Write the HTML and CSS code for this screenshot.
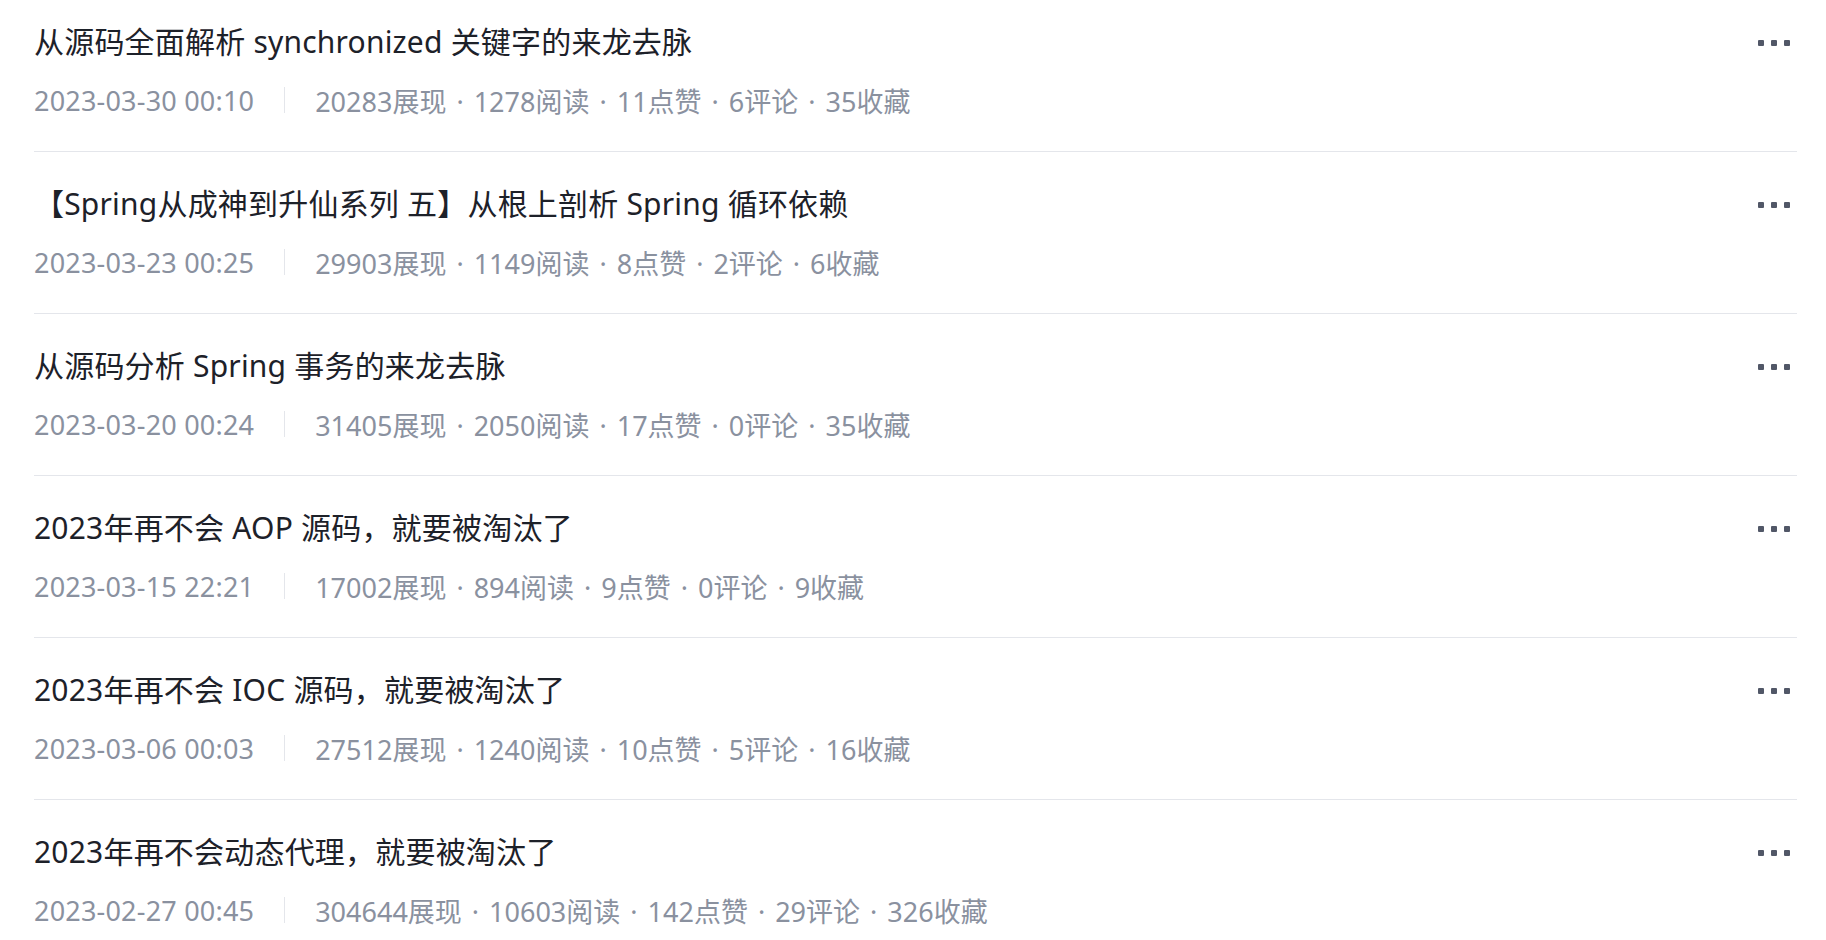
FILE: index.html
```html
<!DOCTYPE html>
<html lang="zh-CN">
<head>
  <meta charset="UTF-8">
  <meta name="viewport" content="width=device-width, initial-scale=1.0">
  <title>文章列表</title>
  <link rel="stylesheet" href="styles.css">
</head>
<body>

  <div class="article-list">

    <div class="article-item">
      <div class="article-main">
        <div class="article-title">从源码全面解析 synchronized 关键字的来龙去脉</div>
        <div class="article-meta">
          <span class="meta-date">2023-03-30 00:10</span>
          <span class="meta-divider"></span>
          <span class="meta-stats">20283展现<i class="dot">·</i>1278阅读<i class="dot">·</i>11点赞<i class="dot">·</i>6评论<i class="dot">·</i>35收藏</span>
        </div>
      </div>
      <div class="more-btn"><span></span><span></span><span></span></div>
    </div>

    <div class="article-item">
      <div class="article-main">
        <div class="article-title">【Spring从成神到升仙系列 五】从根上剖析 Spring 循环依赖</div>
        <div class="article-meta">
          <span class="meta-date">2023-03-23 00:25</span>
          <span class="meta-divider"></span>
          <span class="meta-stats">29903展现<i class="dot">·</i>1149阅读<i class="dot">·</i>8点赞<i class="dot">·</i>2评论<i class="dot">·</i>6收藏</span>
        </div>
      </div>
      <div class="more-btn"><span></span><span></span><span></span></div>
    </div>

    <div class="article-item">
      <div class="article-main">
        <div class="article-title">从源码分析 Spring 事务的来龙去脉</div>
        <div class="article-meta">
          <span class="meta-date">2023-03-20 00:24</span>
          <span class="meta-divider"></span>
          <span class="meta-stats">31405展现<i class="dot">·</i>2050阅读<i class="dot">·</i>17点赞<i class="dot">·</i>0评论<i class="dot">·</i>35收藏</span>
        </div>
      </div>
      <div class="more-btn"><span></span><span></span><span></span></div>
    </div>

    <div class="article-item">
      <div class="article-main">
        <div class="article-title">2023年再不会 AOP 源码，就要被淘汰了</div>
        <div class="article-meta">
          <span class="meta-date">2023-03-15 22:21</span>
          <span class="meta-divider"></span>
          <span class="meta-stats">17002展现<i class="dot">·</i>894阅读<i class="dot">·</i>9点赞<i class="dot">·</i>0评论<i class="dot">·</i>9收藏</span>
        </div>
      </div>
      <div class="more-btn"><span></span><span></span><span></span></div>
    </div>

    <div class="article-item">
      <div class="article-main">
        <div class="article-title">2023年再不会 IOC 源码，就要被淘汰了</div>
        <div class="article-meta">
          <span class="meta-date">2023-03-06 00:03</span>
          <span class="meta-divider"></span>
          <span class="meta-stats">27512展现<i class="dot">·</i>1240阅读<i class="dot">·</i>10点赞<i class="dot">·</i>5评论<i class="dot">·</i>16收藏</span>
        </div>
      </div>
      <div class="more-btn"><span></span><span></span><span></span></div>
    </div>

    <div class="article-item">
      <div class="article-main">
        <div class="article-title">2023年再不会动态代理，就要被淘汰了</div>
        <div class="article-meta">
          <span class="meta-date">2023-02-27 00:45</span>
          <span class="meta-divider"></span>
          <span class="meta-stats">304644展现<i class="dot">·</i>10603阅读<i class="dot">·</i>142点赞<i class="dot">·</i>29评论<i class="dot">·</i>326收藏</span>
        </div>
      </div>
      <div class="more-btn"><span></span><span></span><span></span></div>
    </div>

  </div>

</body>
</html>
```

FILE: styles.css
```css
body {
  margin: 0;
  padding: 0;
  background: #fff;
  font-family: "Noto Sans", "Noto Sans CJK SC", sans-serif;
  overflow: hidden;
}

.article-list {
  margin: -10px 29px 0 34px;
}

.article-item {
  display: flex;
  align-items: flex-start;
  padding: 32px 0 33px;
  border-bottom: 1px solid #e4e6eb;
}

.article-main {
  flex: 1;
  min-width: 0;
}

.article-title {
  font-size: 30px;
  line-height: 40px;
  letter-spacing: 0.2px;
  color: #1d2129;
}

.article-meta {
  display: flex;
  align-items: center;
  margin-top: 20px;
  height: 36px;
  font-size: 27px;
  color: #8a919f;
}

.meta-date {
  letter-spacing: 0.2px;
}

.meta-divider {
  width: 1px;
  height: 26px;
  margin: 0 30px;
  background: #e4e6eb;
}

.dot {
  font-style: normal;
  margin: 0 10px;
}

.more-btn {
  display: flex;
  gap: 7px;
  margin-top: 18px;
  margin-right: 7px;
}

.more-btn span {
  width: 6px;
  height: 6px;
  border-radius: 1px;
  background: #515767;
}
```
